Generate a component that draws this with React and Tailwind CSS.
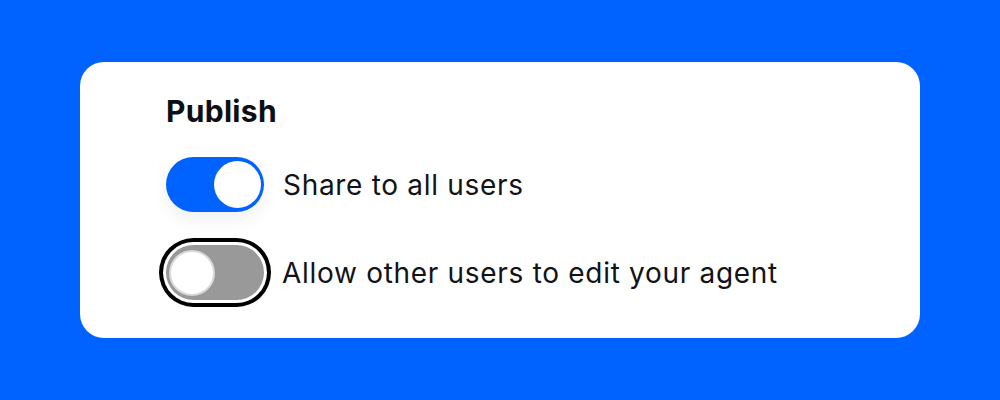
import React from "react";

export default function App() {
  return (
    <div className="w-[1000px] h-[400px] bg-[#0062ff] flex items-center justify-center" style={{ fontFamily: "Inter, 'Noto Sans', sans-serif" }}>
      <div className="w-[840px] h-[276px] bg-white rounded-[24px] pl-[86px] pt-[30px] flex flex-col">
        <div className="text-[30px] leading-[38px] font-bold text-[#0d0f14] tracking-[0.3px]">Publish</div>
        <div className="mt-[27px] flex items-center gap-[19px]">
          <div className="w-[98px] h-[55px] rounded-full bg-[#0062ff] flex items-center justify-end pr-[3px] shadow-[0_8px_18px_rgba(0,0,0,0.06)]">
            <div className="w-[47px] h-[47px] rounded-full bg-white"></div>
          </div>
          <span className="text-[28px] tracking-[0.7px] text-[#111318]">Share to all users</span>
        </div>
        <div className="mt-[33px] flex items-center gap-[18px]">
          <div className="w-[98px] h-[55px] rounded-full bg-[#999999] flex items-center pl-[3px] shadow-[0_0_0_3px_white,0_0_0_7px_black]">
            <div className="w-[46px] h-[46px] rounded-full bg-white border-[2px] border-[#d9d9d9]"></div>
          </div>
          <span className="text-[28px] tracking-[0.7px] text-[#111318]">Allow other users to edit your agent</span>
        </div>
      </div>
    </div>
  );
}
